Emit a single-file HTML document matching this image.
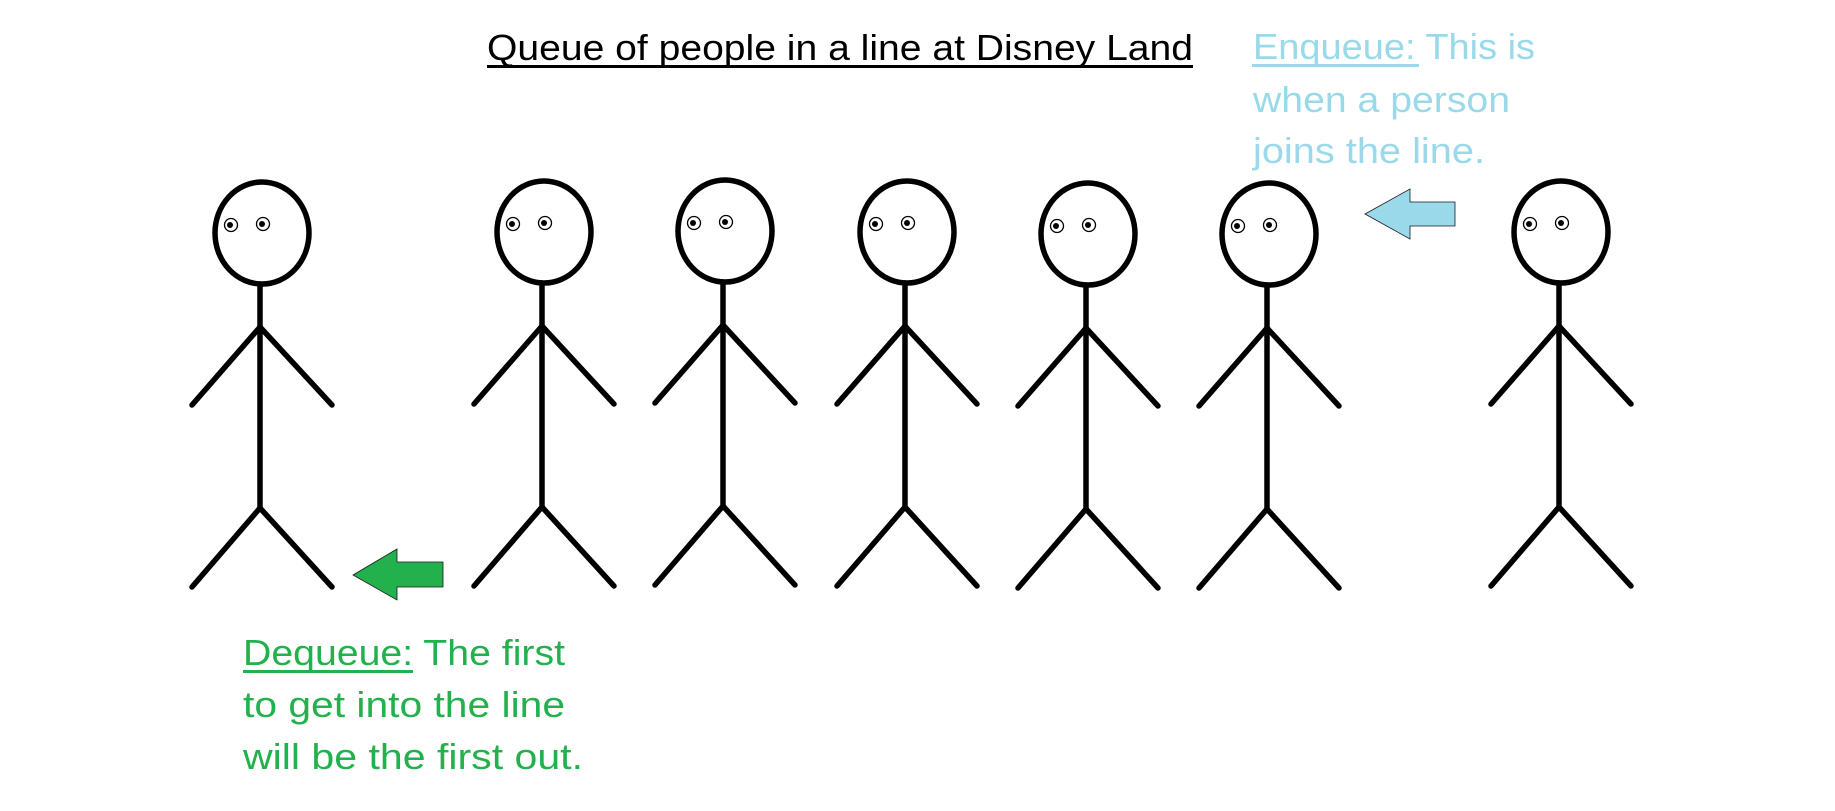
<!DOCTYPE html>
<html><head><meta charset="utf-8"><style>html,body{margin:0;padding:0;background:#fff}svg{display:block}</style></head>
<body>
<svg width="1835" height="811" viewBox="0 0 1835 811" xmlns="http://www.w3.org/2000/svg">
<defs>
<g id="p" fill="none" stroke="#000" stroke-width="5.5" stroke-linecap="round">
<ellipse cx="2" cy="0" rx="47" ry="51"/>
<line x1="0" y1="51" x2="0" y2="275"/>
<line x1="0" y1="94" x2="-68" y2="172"/>
<line x1="0" y1="94" x2="72" y2="172"/>
<line x1="0" y1="275" x2="-68" y2="354"/>
<line x1="0" y1="275" x2="72" y2="354"/>
<g stroke-width="1.3"><circle cx="-29" cy="-8" r="6.5"/><circle cx="3" cy="-9" r="6.5"/></g>
<g fill="#000" stroke="none"><circle cx="-30" cy="-8" r="3"/><circle cx="2" cy="-9" r="3"/></g>
</g>
</defs>
<use href="#p" x="260" y="233"/>
<use href="#p" x="542" y="232"/>
<use href="#p" x="723" y="231"/>
<use href="#p" x="905" y="232"/>
<use href="#p" x="1086" y="234"/>
<use href="#p" x="1267" y="234"/>
<use href="#p" x="1559" y="232"/>
<polygon points="353,575 397,549 397,562 443,562 443,587 397,587 397,600" fill="#22b14c" stroke="#1a1a1a" stroke-width="0.8"/>
<polygon points="1365,214 1410,189 1410,202 1455,202 1455,226 1410,226 1410,239" fill="#99d9ea" stroke="#1a1a1a" stroke-width="0.8"/>
<g font-family="Liberation Sans, sans-serif" font-size="36">
<text x="487" y="60" textLength="706" lengthAdjust="spacingAndGlyphs" fill="#000">Queue of people in a line at Disney Land</text>
<rect x="487" y="65" width="706" height="3" fill="#000"/>
<g fill="#99d9ea">
<text x="1253" y="59" textLength="282" lengthAdjust="spacingAndGlyphs">Enqueue: This is</text>
<text x="1253" y="112" textLength="257" lengthAdjust="spacingAndGlyphs">when a person</text>
<text x="1253" y="163" textLength="232" lengthAdjust="spacingAndGlyphs">joins the line.</text>
<rect x="1252" y="64" width="167" height="3"/>
</g>
<g fill="#22b14c">
<text x="243" y="665" textLength="322" lengthAdjust="spacingAndGlyphs">Dequeue: The first</text>
<text x="243" y="717" textLength="322" lengthAdjust="spacingAndGlyphs">to get into the line</text>
<text x="243" y="769" textLength="340" lengthAdjust="spacingAndGlyphs">will be the first out.</text>
<rect x="243" y="670" width="170" height="3"/>
</g>
</g>
</svg>
</body></html>
